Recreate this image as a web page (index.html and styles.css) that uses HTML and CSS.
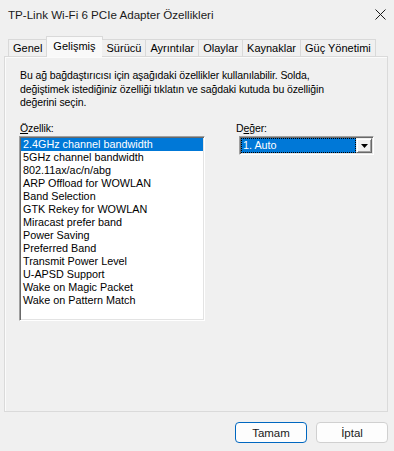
FILE: index.html
```html
<!doctype html>
<html>
<head>
<meta charset="UTF-8">
<title>TP-Link Wi-Fi 6 PCIe Adapter Özellikleri</title>
<link rel="stylesheet" href="styles.css">
</head>
<body>
  <div class="window">
    <!--başlık çubuğu-->
    <div class="titlebar">
      <span class="title">TP-Link Wi-Fi 6 PCIe Adapter Özellikleri</span>
      <svg class="close" width="11" height="11" viewBox="0 0 11 11">
        <path d="M0.5 0.5 L10.5 10.5 M10.5 0.5 L0.5 10.5" stroke="#1a1a1a" stroke-width="1" fill="none"/>
      </svg>
    </div>
    <!--sekmeler-->
    <div class="tabs">
      <div class="tab">Genel</div>
      <div class="tab active">Gelişmiş</div>
      <div class="tab">Sürücü</div>
      <div class="tab">Ayrıntılar</div>
      <div class="tab">Olaylar</div>
      <div class="tab">Kaynaklar</div>
      <div class="tab">Güç Yönetimi</div>
    </div>
    <!--gelişmiş sayfası-->
    <div class="panel">
      <p class="intro">Bu ağ bağdaştırıcısı için aşağıdaki özellikler kullanılabilir. Solda,<br>değiştimek istediğiniz özelliği tıklatın ve sağdaki kutuda bu özelliğin<br>değerini seçin.</p>
      <div class="fields">
        <div class="field-list">
          <div class="label"><u>Ö</u>zellik:</div>
          <div class="listbox">
            <div class="item selected">2.4GHz channel bandwidth</div>
            <div class="item">5GHz channel bandwidth</div>
            <div class="item">802.11ax/ac/n/abg</div>
            <div class="item">ARP Offload for WOWLAN</div>
            <div class="item">Band Selection</div>
            <div class="item">GTK Rekey for WOWLAN</div>
            <div class="item">Miracast prefer band</div>
            <div class="item">Power Saving</div>
            <div class="item">Preferred Band</div>
            <div class="item">Transmit Power Level</div>
            <div class="item">U-APSD Support</div>
            <div class="item">Wake on Magic Packet</div>
            <div class="item">Wake on Pattern Match</div>
          </div>
        </div>
        <div class="field-value">
          <div class="label">D<u>e</u>ğer:</div>
          <div class="combo">
            <div class="combo-text"><span class="focus">1. Auto</span></div>
            <div class="combo-btn">
              <svg width="7" height="4" viewBox="0 0 7 4"><path d="M0 0 H7 L3.5 4 Z" fill="#000"/></svg>
            </div>
          </div>
        </div>
      </div>
    </div>
    <!--butonlar-->
    <div class="actions">
      <button class="btn default">Tamam</button>
      <button class="btn">İptal</button>
    </div>
  </div>
</body>
</html>
```

FILE: styles.css
```css
*{
	box-sizing: border-box;
}
html, body{
	width:100%;
	height:100%;
	overflow:hidden;
}
body{
	margin:0;
	padding:0;
	background:#f0f0f0;
	font-family:"Liberation Sans", Arial, sans-serif;
	font-size:11px;
	color:#000;
}
.titlebar{
	height:30px;
	display:flex;
	align-items:center;
	justify-content:space-between;
	padding:0 8px 2px 8px;
}
.title{
	font-size:11.6px;
	color:#1a1a1a;
}
.tabs{
	display:flex;
	align-items:flex-end;
	height:27px;
	padding:6px 0 0 8px;
	margin-bottom:-1px;
	position:relative;
	z-index:1;
}
.tab{
	height:18px;
	line-height:17px;
	padding:0 4px;
	border:1px solid #d9d9d9;
	border-left:0;
	background:#f0f0f0;
	font-size:11px;
	white-space:nowrap;
}
.tab:first-child{
	border-left:1px solid #d9d9d9;
}
.tab.active{
	height:21px;
	line-height:18px;
	padding:0 6px;
	border-left:1px solid #d9d9d9;
	border-bottom:0;
	background:#f9f9f9;
	margin-left:-1px;
	margin-right:-1px;
}
.tab.active + .tab{
	border-left:0;
	padding-left:5px;
}
.panel{
	margin:0 6px 0 4px;
	height:356px;
	border:1px solid #dadada;
	box-shadow:inset 1px 1px 0 #fbfbfb;
	padding:12px 14px 0 14px;
}
.intro{
	margin:0;
	line-height:13.5px;
	font-size:10.5px;
	letter-spacing:-0.1px;
	padding-left:1px;
}
.fields{
	display:grid;
	grid-template-columns:186px 1fr;
	column-gap:30px;
	margin-top:12px;
}
.label{
	line-height:13px;
	margin-bottom:1.5px;
	font-size:10.5px;
	letter-spacing:-0.1px;
	padding-left:1px;
}
.listbox{
	height:185px;
	background:#fff;
	border:1px solid;
	border-color:#a0a0a0 #fff #fff #a0a0a0;
	box-shadow:inset 1px 1px 0 #696969, inset -1px -1px 0 #e3e3e3;
	padding:1px;
}
.item{
	height:13px;
	line-height:13px;
	padding-left:2px;
	white-space:nowrap;
	font-size:10.8px;
}
.item.selected{
	background:#0078d7;
	color:#fff;
}
.combo{
	margin-left:4px;
	width:135px;
	height:19px;
	display:flex;
	background:#fff;
	border:1px solid;
	border-color:#a0a0a0 #fff #fff #a0a0a0;
	box-shadow:inset 1px 1px 0 #696969, inset -1px -1px 0 #e3e3e3;
	padding:1px;
}
.combo-text{
	flex:1;
	background:#0078d7;
	color:#fff;
	display:flex;
}
.focus{
	flex:1;
	border:1px dotted #fff;
	outline:1px dotted #000;
	outline-offset:-1px;
	line-height:13px;
	padding-left:1px;
	font-size:10.8px;
}
.combo-btn{
	width:16px;
	background:#f0f0f0;
	border:1px solid;
	border-color:#f0f0f0 #696969 #696969 #f0f0f0;
	box-shadow:inset 1px 1px 0 #fff, inset -1px -1px 0 #a0a0a0;
	display:flex;
	align-items:center;
	justify-content:center;
}
.actions{
	display:flex;
	justify-content:flex-end;
	gap:9px;
	padding:10px 6px 0 0;
}
.btn{
	width:72px;
	height:21px;
	border:1px solid #d0d0d0;
	border-radius:4px;
	background:#fdfdfd;
	font-family:"Liberation Sans", Arial, sans-serif;
	font-size:11.5px;
	color:#1a1a1a;
	padding:0;
}
.btn.default{
	border-color:#0067c0;
}
```
